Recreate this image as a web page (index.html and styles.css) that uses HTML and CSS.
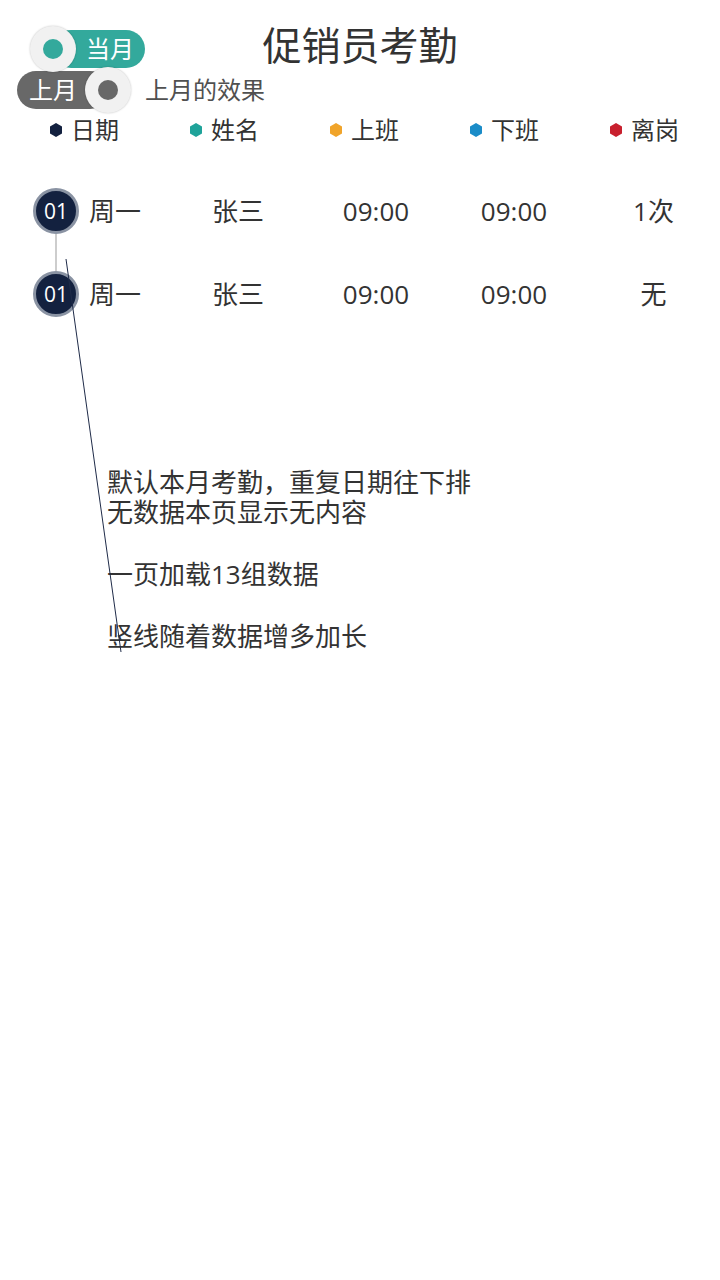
FILE: index.html
```html
<!DOCTYPE html>
<html lang="zh-CN">
<head>
<meta charset="utf-8">
<title>促销员考勤</title>
<link rel="stylesheet" href="styles.css">
</head>
<body>
<div class="page">
  <header class="header">
    <div class="top-row">
      <div class="toggle toggle-on">
        <span class="knob"><span class="dot"></span></span>
        <span class="pill">当月</span>
      </div>
      <h1 class="title">促销员考勤</h1>
      <div></div>
    </div>
    <div class="second-row">
      <div class="toggle toggle-off">
        <span class="pill">上月</span>
        <span class="knob"><span class="dot"></span></span>
      </div>
      <span class="hint">上月的效果</span>
    </div>
  </header>

  <ul class="legend">
    <li class="legend-item"><span class="hex hex-navy"></span>日期</li>
    <li class="legend-item"><span class="hex hex-teal"></span>姓名</li>
    <li class="legend-item"><span class="hex hex-orange"></span>上班</li>
    <li class="legend-item"><span class="hex hex-blue"></span>下班</li>
    <li class="legend-item"><span class="hex hex-red"></span>离岗</li>
  </ul>

  <div class="timeline">
    <div class="row">
      <span class="badge">01</span>
      <span class="cell day">周一</span>
      <span class="cell">张三</span>
      <span class="cell">09:00</span>
      <span class="cell">09:00</span>
      <span class="cell last">1次</span>
    </div>
    <div class="connector"></div>
    <div class="row">
      <span class="badge">01</span>
      <span class="cell day">周一</span>
      <span class="cell">张三</span>
      <span class="cell">09:00</span>
      <span class="cell">09:00</span>
      <span class="cell last">无</span>
    </div>
  </div>

  <div class="notes">
    <p>默认本月考勤，重复日期往下排<br>无数据本页显示无内容</p>
    <p>一页加载13组数据</p>
    <p>竖线随着数据增多加长</p>
  </div>

  <svg class="annot-line" width="720" height="700" viewBox="0 0 720 700" aria-hidden="true">
    <line x1="66" y1="259" x2="121" y2="652" stroke="#1f2b48" stroke-width="1"/>
  </svg>
</div>
</body>
</html>
```

FILE: styles.css
```css
* { box-sizing: border-box; }

html, body {
  margin: 0;
  padding: 0;
  background: #ffffff;
}

body {
  font-family: "Open Sans", "Noto Sans CJK SC", sans-serif;
  color: #333333;
}

.page {
  position: relative;
  width: 720px;
  height: 1280px;
  overflow: hidden;
}

.header {
  padding-top: 26px;
}

.top-row {
  display: grid;
  grid-template-columns: 1fr auto 1fr;
  align-items: start;
}

.top-row .toggle {
  padding-left: 30px;
}

.title {
  margin: 0;
  font-size: 39px;
  line-height: 38px;
  font-weight: 400;
  color: #333333;
  letter-spacing: 0;
}

.second-row {
  display: flex;
  align-items: center;
  margin-top: -5px;
  padding-left: 17px;
  gap: 14px;
}

.hint {
  font-size: 24px;
  line-height: 30px;
  color: #505050;
}

.toggle {
  display: flex;
  align-items: center;
}

.knob {
  position: relative;
  z-index: 2;
  width: 46px;
  height: 46px;
  border-radius: 50%;
  background: #f1f1f1;
  box-shadow: 0 0 2px rgba(0, 0, 0, 0.25);
  display: flex;
  align-items: center;
  justify-content: center;
  flex: none;
}

.dot {
  width: 20px;
  height: 20px;
  border-radius: 50%;
}

.pill {
  height: 38px;
  line-height: 38px;
  font-size: 24px;
  color: #ffffff;
  border-radius: 19px;
  white-space: nowrap;
}

.toggle-on .pill {
  background: #33a99c;
  margin-left: -24px;
  padding-left: 34px;
  padding-right: 11px;
}

.toggle-on .dot {
  background: #33a99c;
}

.toggle-off .pill {
  background: #686868;
  padding-left: 12px;
  padding-right: 32px;
}

.toggle-off .knob {
  margin-left: -24px;
}

.toggle-off .dot {
  background: #686868;
}

.legend {
  list-style: none;
  margin: 2px 0 0;
  padding: 0 0 0 50px;
  display: grid;
  grid-template-columns: repeat(5, 140px);
}

.legend-item {
  display: flex;
  align-items: center;
  gap: 9px;
  font-size: 24px;
  line-height: 30px;
  color: #333333;
}

.hex {
  width: 12px;
  height: 14px;
  clip-path: polygon(50% 0, 100% 25%, 100% 75%, 50% 100%, 0 75%, 0 25%);
  flex: none;
}

.hex-navy { background: #13213f; }
.hex-teal { background: #1fa39a; }
.hex-orange { background: #f0a42a; }
.hex-blue { background: #1a8cc8; }
.hex-red { background: #c8202e; }

.timeline {
  margin-top: 43px;
}

.row {
  display: grid;
  grid-template-columns: 46px 90px repeat(3, 138px) 1fr;
  align-items: center;
  height: 46px;
  padding-left: 33px;
}

.badge {
  width: 46px;
  height: 46px;
  border-radius: 50%;
  background: #13213f;
  border: 3px solid #8a93a3;
  color: #ffffff;
  font-size: 21px;
  line-height: 40px;
  text-align: center;
}

.cell {
  font-size: 26px;
  line-height: 31px;
  text-align: center;
  color: #333333;
}

.cell.day {
  text-align: left;
  padding-left: 10px;
}

.cell.last {
  padding-left: 4px;
}

.connector {
  width: 2px;
  height: 37px;
  margin-left: 55px;
  background: #cdcdcd;
}

.notes {
  margin-top: 150px;
  padding-left: 107px;
  display: flex;
  flex-direction: column;
  gap: 32px;
}

.notes p {
  margin: 0;
  font-size: 26px;
  line-height: 30px;
  color: #333333;
}

.annot-line {
  position: absolute;
  top: 0;
  left: 0;
  pointer-events: none;
}
```
